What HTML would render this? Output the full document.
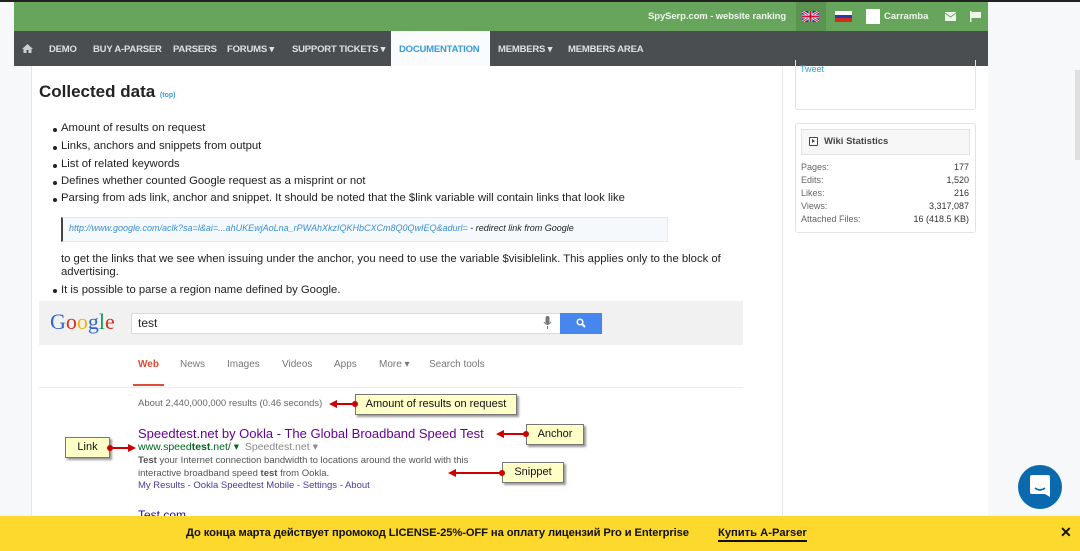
<!DOCTYPE html>
<html><head><meta charset="utf-8"><style>
*{margin:0;padding:0;box-sizing:border-box}
body{width:1080px;height:551px;overflow:hidden;position:relative;background:#f7f8f9;font-family:"Liberation Sans",sans-serif;color:#333}
.a{position:absolute;white-space:nowrap}
.nav span{position:absolute;top:44px;font-size:9.5px;font-weight:bold;color:#e0e0e0;letter-spacing:-0.2px}
.b{font-size:11.3px;color:#222}
.dot{position:absolute;width:4px;height:4px;border-radius:50%;background:#222}
.st{font-size:9px;color:#666}
.sv{font-size:9px;color:#333;text-align:right;right:111px}
.call{position:absolute;background:#ffffc8;border:1px solid #777;box-shadow:2px 2px 2px #999;font-size:11px;font-family:"Liberation Sans Narrow","Liberation Sans",sans-serif;text-align:center;color:#111}
.arr{position:absolute;height:2px;background:#c00}
.rd{position:absolute;width:6px;height:6px;border-radius:50%;background:#c00}
.tri{position:absolute;width:0;height:0;border-top:4px solid transparent;border-bottom:4px solid transparent}
</style></head><body>
<div class="a" style="left:0;top:0;width:1080px;height:2px;background:#222"></div>
<div class="a" style="left:14px;top:2px;width:974px;height:29px;background:#67a55c"></div>
<div class="a" style="left:796px;top:2px;width:30px;height:29px;background:#5a9450"></div>
<div class="a" style="left:648px;top:11px;font-size:9.5px;font-weight:bold;color:#eef6ec;letter-spacing:-0.1px">SpySerp.com - website ranking</div>
<svg class="a" style="left:802px;top:11px" width="17" height="11" viewBox="0 0 17 11"><rect width="17" height="11" fill="#1f3b8f"/><path d="M0 0L17 11M17 0L0 11" stroke="#fff" stroke-width="2.5"/><path d="M0 0L17 11M17 0L0 11" stroke="#c8102e" stroke-width="1"/><path d="M8.5 0V11M0 5.5H17" stroke="#fff" stroke-width="3.5"/><path d="M8.5 0V11M0 5.5H17" stroke="#c8102e" stroke-width="2"/></svg>
<div class="a" style="left:835px;top:11px;width:17px;height:4px;background:#fff"></div>
<div class="a" style="left:835px;top:15px;width:17px;height:3px;background:#1c3fb0"></div>
<div class="a" style="left:835px;top:18px;width:17px;height:4px;background:#d52b1e"></div>
<div class="a" style="left:866px;top:9px;width:14px;height:15px;background:#fff"></div>
<div class="a" style="left:884px;top:11px;font-size:9.5px;font-weight:bold;color:#eef6ec">Carramba</div>
<svg class="a" style="left:945px;top:12px" width="11" height="9"><rect width="11" height="9" fill="#eef6ec"/><path d="M0 1L5.5 5L11 1" stroke="#67a55c" fill="none"/></svg>
<svg class="a" style="left:970px;top:11px" width="11" height="11"><rect x="0" y="0" width="1.5" height="11" fill="#eef6ec"/><path d="M1.5 1H11V7H1.5Z" fill="#eef6ec"/></svg>

<div class="a" style="left:14px;top:31px;width:974px;height:35px;background:#4a4e51"></div>
<div class="a" style="left:391px;top:31px;width:99px;height:35px;background:#fafbfc"></div>
<div class="nav">
<svg class="a" style="left:22px;top:44px" width="11" height="9"><path d="M5.5 0L11 5H9.5V9H6.5V6H4.5V9H1.5V5H0Z" fill="#ccc"/></svg>
<span style="left:49px">DEMO</span><span style="left:93px">BUY A-PARSER</span><span style="left:173px">PARSERS</span><span style="left:227px">FORUMS ▾</span><span style="left:292px">SUPPORT TICKETS ▾</span><span style="left:399px;color:#3a9ad9">DOCUMENTATION</span><span style="left:498px">MEMBERS ▾</span><span style="left:568px">MEMBERS AREA</span>
</div>

<div class="a" style="left:14px;top:66px;width:974px;height:485px;background:#fff"></div>
<div class="a" style="left:14px;top:66px;width:18px;height:485px;background:#f7f8f9;border-right:1px solid #e6e6e6"></div>
<div class="a" style="left:782px;top:66px;width:1px;height:485px;background:#e8e8e8"></div>
<div class="a" style="left:1075px;top:70px;width:5px;height:90px;background:#e0e0e0"></div>

<div class="a" style="left:39px;top:82px;font-size:17px;font-weight:bold;color:#222">Collected data <span style="font-size:7px;color:#3a9ad9">(top)</span></div>
<div class="dot" style="left:53px;top:128px"></div><div class="a b" style="left:61px;top:122px">Amount of results on request</div>
<div class="dot" style="left:53px;top:146px"></div><div class="a b" style="left:61px;top:140px">Links, anchors and snippets from output</div>
<div class="dot" style="left:53px;top:164px"></div><div class="a b" style="left:61px;top:158px">List of related keywords</div>
<div class="dot" style="left:53px;top:181px"></div><div class="a b" style="left:61px;top:175px">Defines whether counted Google request as a misprint or not</div>
<div class="dot" style="left:53px;top:198px"></div><div class="a b" style="left:61px;top:192px">Parsing from ads link, anchor and snippet. It should be noted that the $link variable will contain links that look like</div>
<div class="a" style="left:61px;top:217px;width:607px;height:25px;background:#f5f9fc;border:1px solid #e3eaf0;border-left:2px solid #444"></div>
<div class="a" style="left:69px;top:223px;font-size:9px;font-style:italic;color:#3a8fd0">http://www.google.com/aclk?sa=l&amp;ai=...ahUKEwjAoLna_rPWAhXkzIQKHbCXCm8Q0QwIEQ&amp;adurl= <span style="color:#222">- redirect link from Google</span></div>
<div class="a b" style="left:61px;top:253px">to get the links that we see when issuing under the anchor, you need to use the variable $visiblelink. This applies only to the block of</div>
<div class="a b" style="left:61px;top:266px">advertising.</div>
<div class="dot" style="left:53px;top:289px"></div><div class="a b" style="left:61px;top:284px">It is possible to parse a region name defined by Google.</div>

<div class="a" style="left:39px;top:301px;width:704px;height:44px;background:#f1f1f1"></div>
<div class="a" style="left:50px;top:309px;font-family:'Liberation Serif',serif;font-size:22px"><span style="color:#3366cc">G</span><span style="color:#d93025">o</span><span style="color:#f4b400">o</span><span style="color:#3366cc">g</span><span style="color:#0f9d58">l</span><span style="color:#d93025">e</span></div>
<div class="a" style="left:131px;top:313px;width:430px;height:21px;background:#fff;border:1px solid #d9d9d9"></div>
<div class="a" style="left:138px;top:316px;font-size:12px;color:#222">test</div>
<svg class="a" style="left:543px;top:316px" width="9" height="14"><rect x="2.5" y="0" width="4" height="8" rx="2" fill="#777"/><path d="M1 6Q4.5 11 8 6M4.5 10V13" stroke="#777" fill="none"/></svg>
<div class="a" style="left:560px;top:313px;width:42px;height:21px;background:#4787ed"></div>
<svg class="a" style="left:576px;top:318px" width="10" height="10"><circle cx="4" cy="4" r="2.8" stroke="#fff" stroke-width="1.5" fill="none"/><path d="M6 6L9 9" stroke="#fff" stroke-width="2"/></svg>
<div class="a" style="left:138px;top:359px;font-size:10px;font-weight:bold;color:#dd4b39">Web</div>
<div class="a" style="left:133px;top:384px;width:31px;height:2px;background:#dd4b39"></div>
<div class="a" style="left:180px;top:359px;font-size:10px;color:#777">News</div>
<div class="a" style="left:227px;top:359px;font-size:10px;color:#777">Images</div>
<div class="a" style="left:282px;top:359px;font-size:10px;color:#777">Videos</div>
<div class="a" style="left:334px;top:359px;font-size:10px;color:#777">Apps</div>
<div class="a" style="left:379px;top:359px;font-size:10px;color:#777">More ▾</div>
<div class="a" style="left:429px;top:359px;font-size:10px;color:#777">Search tools</div>
<div class="a" style="left:39px;top:387px;width:704px;height:1px;background:#ebebeb"></div>
<div class="a" style="left:138px;top:398px;font-size:9.5px;color:#666">About 2,440,000,000 results (0.46 seconds)</div>
<div class="a" style="left:138px;top:426px;font-size:13px;color:#660099">Speedtest.net by Ookla - The Global Broadband Speed Test</div>
<div class="a" style="left:138px;top:441px;font-size:10.5px;color:#006621">www.speed<b>test</b>.net/ ▾ <span style="color:#888">&nbsp;Speedtest.net ▾</span></div>
<div class="a" style="left:138px;top:455px;font-size:9.5px;color:#545454;line-height:12.5px"><b>Test</b> your Internet connection bandwidth to locations around the world with this<br>interactive broadband speed <b>test</b> from Ookla.</div>
<div class="a" style="left:138px;top:480px;font-size:9.5px;color:#4a3a9a">My Results - Ookla Speedtest Mobile - Settings - About</div>
<div class="a" style="left:138px;top:508px;font-size:12px;color:#1a0dab">Test.com</div>

<div class="call" style="left:355px;top:394px;width:162px;height:21px;line-height:19px">Amount of results on request</div>
<div class="arr" style="left:336px;top:403px;width:20px"></div><div class="tri" style="left:329px;top:400px;border-right:8px solid #c00"></div><div class="rd" style="left:352px;top:401px"></div>
<div class="call" style="left:526px;top:424px;width:58px;height:21px;line-height:19px">Anchor</div>
<div class="arr" style="left:503px;top:433px;width:24px"></div><div class="tri" style="left:496px;top:430px;border-right:8px solid #c00"></div><div class="rd" style="left:523px;top:431px"></div>
<div class="call" style="left:65px;top:437px;width:45px;height:21px;line-height:19px">Link</div>
<div class="arr" style="left:110px;top:447px;width:20px"></div><div class="tri" style="left:128px;top:444px;border-left:8px solid #c00"></div><div class="rd" style="left:107px;top:445px"></div>
<div class="call" style="left:502px;top:462px;width:62px;height:21px;line-height:19px">Snippet</div>
<div class="arr" style="left:455px;top:472px;width:48px"></div><div class="tri" style="left:448px;top:469px;border-right:8px solid #c00"></div><div class="rd" style="left:499px;top:470px"></div>

<div class="a" style="left:795px;top:60px;width:181px;height:50px;border:1px solid #e3e3e3;border-top:none;border-radius:0 0 3px 3px"></div>
<div class="a" style="left:800px;top:64px;font-size:9px;color:#3a9ad9">Tweet</div>
<div class="a" style="left:795px;top:123px;width:181px;height:110px;border:1px solid #e3e3e3;border-radius:3px"></div>
<div class="a" style="left:801px;top:129px;width:169px;height:26px;background:#f7f7f7;border:1px solid #e3e3e3"></div>
<div class="a" style="left:809px;top:137px;width:9px;height:9px;border:1.5px solid #444;border-radius:1px"></div>
<div class="tri" style="left:812px;top:139px;border-top:2.5px solid transparent;border-bottom:2.5px solid transparent;border-left:3.5px solid #444"></div>
<div class="a" style="left:824px;top:136px;font-size:9.5px;font-weight:bold;color:#444">Wiki Statistics</div>
<div class="a st" style="left:801px;top:162px">Pages:</div><div class="a sv" style="top:162px">177</div>
<div class="a st" style="left:801px;top:175px">Edits:</div><div class="a sv" style="top:175px">1,520</div>
<div class="a st" style="left:801px;top:188px">Likes:</div><div class="a sv" style="top:188px">216</div>
<div class="a st" style="left:801px;top:201px">Views:</div><div class="a sv" style="top:201px">3,317,087</div>
<div class="a st" style="left:801px;top:214px">Attached Files:</div><div class="a sv" style="top:214px">16 (418.5 KB)</div>

<div class="a" style="left:1018px;top:465px;width:44px;height:44px;border-radius:50%;background:#0b6aad"></div>
<svg class="a" style="left:1030px;top:475px" width="20" height="24"><path d="M2 0H18Q20 0 20 2V22L15 19H2Q0 19 0 17V2Q0 0 2 0Z" fill="#fff"/><path d="M5 13Q10 17 15 13" stroke="#0b6aad" stroke-width="1.5" fill="none"/></svg>

<div class="a" style="left:0;top:516px;width:1080px;height:35px;background:#fcd92c"></div>
<div class="a" style="left:186px;top:527px;font-size:11.2px;font-weight:bold;color:#111;letter-spacing:-0.1px">До конца марта действует промокод LICENSE-25%-OFF на оплату лицензий Pro и Enterprise</div>
<div class="a" style="left:718px;top:527px;font-size:11.2px;font-weight:bold;color:#111;border-bottom:2px solid #111;padding-bottom:1px">Купить A-Parser</div>
<div class="a" style="left:1060px;top:524px;font-size:14px;font-weight:bold;color:#111">✕</div>
</body></html>
